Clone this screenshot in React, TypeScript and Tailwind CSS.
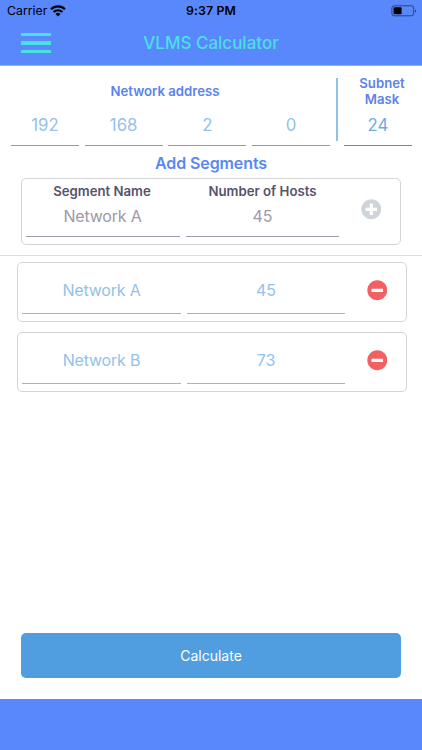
import { FaMinusCircle, FaPlusCircle } from "react-icons/fa";

const octets = [
  { value: "192", width: "w-[68px]" },
  { value: "168", width: "w-[78px]" },
  { value: "2", width: "w-[78px]" },
  { value: "0", width: "w-[78px]" },
];

const segments = [
  { name: "Network A", hosts: "45" },
  { name: "Network B", hosts: "73" },
];

const StatusBar = () => (
  <div className="flex h-[22px] items-center justify-between pr-[5px] pl-[7px] text-black">
    <div className="flex w-[90px] items-center gap-[3px]">
      <span className="text-[12.3px]">Carrier</span>
      <svg width="16" height="12" viewBox="0 0 16 12" fill="none" stroke="currentColor" strokeWidth="2.2">
        <path d="M1 4.3a10 10 0 0 1 14 0" />
        <path d="M3.6 7.1a6.2 6.2 0 0 1 8.8 0" />
        <path d="M8 11.4 5.5 8.9a3.6 3.6 0 0 1 5 0Z" fill="currentColor" stroke="none" />
      </svg>
    </div>
    <span className="pr-[2px] text-[12.3px] font-semibold tracking-[0.1px]">9:37 PM</span>
    <div className="flex w-[90px] justify-end">
      <svg width="26" height="12" viewBox="0 0 26 12">
        <rect x="0.9" y="0.8" width="21.8" height="10" rx="2.4" fill="none" stroke="#000" strokeOpacity="0.5" />
        <rect x="2.6" y="2.3" width="8" height="7" rx="1" fill="#000" />
        <path d="M24 4.2v3.4c1.4-.5 1.4-2.9 0-3.4Z" fill="#000" fillOpacity="0.5" />
      </svg>
    </div>
  </div>
);

const Header = () => (
  <header className="h-[66px] shrink-0 border-b border-[#8fb0fd] bg-[#5888fc]">
    <StatusBar />
    <div className="flex h-[42px] items-center justify-between px-[21px]">
      <button className="flex w-[30px] flex-col gap-[5px]" aria-label="Menu">
        <span className="h-[3.5px] w-full bg-[#4be0e4]"></span>
        <span className="h-[3.5px] w-full bg-[#4be0e4]"></span>
        <span className="h-[3.5px] w-full bg-[#4be0e4]"></span>
      </button>
      <h1 className="pt-[2px] text-[17px] font-medium text-[#4bdfe6]">VLMS Calculator</h1>
      <span className="w-[30px]"></span>
    </div>
  </header>
);

const Field = ({ value, className }: { value: string; className: string }) => (
  <div className={`flex items-center justify-center border-b ${className}`}>{value}</div>
);

const NetworkAddress = () => (
  <section className="flex h-[80px] pl-[11px] text-[#5c83ea]">
    <div className="w-[319px]">
      <h2 className="mt-[15px] h-[24px] pr-[11px] text-center text-[13.2px] leading-[20px] font-semibold">
        Network address
      </h2>
      <div className="flex justify-between">
        {octets.map((octet, i) => (
          <Field
            key={i}
            value={octet.value}
            className={`h-[41px] border-[#9b97ab] pt-[2px] text-[16.8px] text-[#93c2ea] ${octet.width}`}
          />
        ))}
      </div>
    </div>
    <div className="mt-[12px] ml-[6px] h-[63px] w-[2px] bg-[#91c0e6]"></div>
    <div className="ml-[6px] w-[68px]">
      <h2 className="mt-[10px] h-[29px] pr-[6px] pl-[14px] text-center text-[13.2px] leading-[15.5px] font-semibold">
        Subnet Mask
      </h2>
      <Field value="24" className="h-[41px] border-[#85819a] pt-[2px] text-[16.8px] text-[#72acdf]" />
    </div>
  </section>
);

const AddSegment = () => (
  <section className="mx-[21px] flex h-[67px] rounded-[5px] border border-[#d5d5d8] pl-[4px]">
    <div className="w-[154px] text-center text-[#57536f]">
      <h3 className="h-[24px] pr-[2px] text-[13.2px] leading-[24px] font-semibold">Segment Name</h3>
      <Field
        value="Network A"
        className="h-[34px] border-[#a19dae] pr-px pb-[8px] text-[16px] tracking-[-0.2px] text-[#9c99a9]"
      />
    </div>
    <div className="ml-[6px] w-[153px] text-center text-[#57536f]">
      <h3 className="h-[24px] text-[13.2px] leading-[24px] font-semibold">Number of Hosts</h3>
      <Field value="45" className="h-[34px] border-[#a19dae] pb-[8px] text-[16px] text-[#9c99a9]" />
    </div>
    <button className="ml-[21.5px] self-start pt-[20px] text-[#ced4da]" aria-label="Add segment">
      <FaPlusCircle size={20.6} />
    </button>
  </section>
);

const SegmentRow = ({ name, hosts }: { name: string; hosts: string }) => (
  <li className="flex h-[60px] rounded-[5px] border border-[#d5d5d8] pl-[4px]">
    <Field
      value={name}
      className="h-[51px] w-[159px] border-[#b0b0b8] pt-[4px] text-[16px] tracking-[-0.2px] text-[#93c2ea]"
    />
    <Field value={hosts} className="ml-[6px] h-[51px] w-[158px] border-[#b0b0b8] pt-[4px] text-[16px] text-[#93c2ea]" />
    <button className="ml-[21.5px] self-start pt-[17px] text-[#f16162]" aria-label="Remove segment">
      <FaMinusCircle size={20.6} />
    </button>
  </li>
);

const App = () => {
  return (
    <div className="flex h-[750px] w-[422px] flex-col bg-white font-['Inter','Liberation_Sans',sans-serif]">
      <Header />
      <NetworkAddress />
      <h2 className="h-[32px] text-center text-[16px] leading-[34px] font-semibold tracking-[-0.1px] text-[#5888f4]">
        Add Segments
      </h2>
      <AddSegment />

      <div className="mt-[10px] border-t border-[#dedede]"></div>

      <ul className="mt-[6px] mr-[15px] ml-[17px] flex flex-col gap-[10.3px]">
        {segments.map((segment) => (
          <SegmentRow key={segment.name} name={segment.name} hosts={segment.hosts} />
        ))}
      </ul>

      <button className="mx-[21px] mt-auto mb-[21px] h-[45px] shrink-0 rounded-[5px] bg-[#509ee0] text-[14px] text-white">
        Calculate
      </button>
      <footer className="h-[51px] shrink-0 bg-[#5888fc]"></footer>
    </div>
  );
};

export default App;
